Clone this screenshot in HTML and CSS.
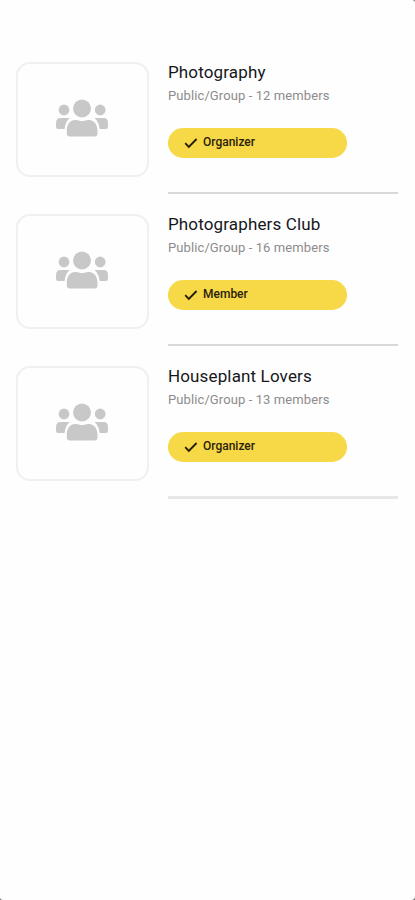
FILE: index.html
```html
<!DOCTYPE html>
<html lang="en">
<head>
<meta charset="utf-8">
<title>Groups</title>
<link rel="stylesheet" href="styles.css">
</head>
<body>
<svg class="defs" aria-hidden="true">
  <symbol id="people" viewBox="0 0 52 38">
    <circle cx="26" cy="9.5" r="9"/>
    <circle cx="8" cy="11" r="5.4"/>
    <circle cx="44.2" cy="11" r="5.4"/>
    <path d="M4.5 19H13.8C10.9 21.3 9 25 8.6 30H2Q0 30 0 28V24Q.3 19 4.5 19Z"/>
    <path d="M47.7 19H38.4C41.3 21.3 43.2 25 43.6 30H50Q52 30 52 28V24Q51.9 19 47.7 19Z"/>
    <path d="M19 21C22 20.6 23 22 26 22S30 20.6 33 21C38.5 21.4 41.5 25.8 41.5 32V34.5Q41.5 37.5 38.5 37.5H13.8Q10.8 37.5 10.8 34.5V32C10.8 25.8 13.5 21.4 19 21Z"/>
  </symbol>
  <symbol id="check" viewBox="0 0 14 12">
    <path d="M1.2 6.2 4.8 9.9 12.6 2" fill="none" stroke="#211c08" stroke-width="1.8"/>
  </symbol>
</svg>
<main class="screen">
  <article class="group">
    <div class="thumb"><svg class="people"><use href="#people"/></svg></div>
    <div class="info">
      <h2 class="title">Photography</h2>
      <p class="meta">Public/Group - 12 members</p>
      <div class="role"><svg class="check"><use href="#check"/></svg><span>Organizer</span></div>
    </div>
  </article>
  <article class="group">
    <div class="thumb"><svg class="people"><use href="#people"/></svg></div>
    <div class="info">
      <h2 class="title">Photographers Club</h2>
      <p class="meta">Public/Group - 16 members</p>
      <div class="role"><svg class="check"><use href="#check"/></svg><span>Member</span></div>
    </div>
  </article>
  <article class="group">
    <div class="thumb"><svg class="people"><use href="#people"/></svg></div>
    <div class="info">
      <h2 class="title">Houseplant Lovers</h2>
      <p class="meta">Public/Group - 13 members</p>
      <div class="role"><svg class="check"><use href="#check"/></svg><span>Organizer</span></div>
    </div>
  </article>
</main>
</body>
</html>
```
FILE: styles.css
```css
* { box-sizing: border-box; }
html { background: #777; }
body { margin: 0; font-family: Roboto, sans-serif; }
.defs { position: absolute; width: 0; height: 0; }
.screen {
  height: 900px;
  padding: 61px 17px 0 16px;
  background: #fefefe;
  border-radius: 0 3px 4px 3px;
}
.group {
  display: grid;
  grid-template-columns: 133px 1fr;
  column-gap: 19px;
  height: 133px;
  margin-bottom: 19.2px;
}
.thumb {
  height: 115px;
  margin-top: .5px;
  display: flex;
  justify-content: center;
  border: 2px solid #f0f0f0;
  border-radius: 14px;
}
.people { width: 52px; height: 38px; margin: 35px 1px 0 0; fill: #c8c8c8; }
.info { border-bottom: 2px solid #d8d8d8; }
.group:last-child .info { height: 134px; border-bottom: 3px solid #e7e7e7; }
.title {
  margin: 0;
  font-size: 17px;
  line-height: 22px;
  font-weight: 400;
  letter-spacing: .14px;
  color: #16161b;
}
.meta {
  margin: 5px 0 0;
  font-size: 13px;
  line-height: 16px;
  letter-spacing: .1px;
  color: #8c8c8c;
}
.role {
  display: flex;
  align-items: center;
  width: 179px;
  height: 30px;
  margin-top: 24px;
  padding-left: 16px;
  border-radius: 15px;
  background: #f7d846;
  font-size: 12px;
  font-weight: 500;
  color: #29230b;
}
.role span { position: relative; top: -1px; }
.check { width: 14px; height: 12px; margin-right: 5px; }
```
